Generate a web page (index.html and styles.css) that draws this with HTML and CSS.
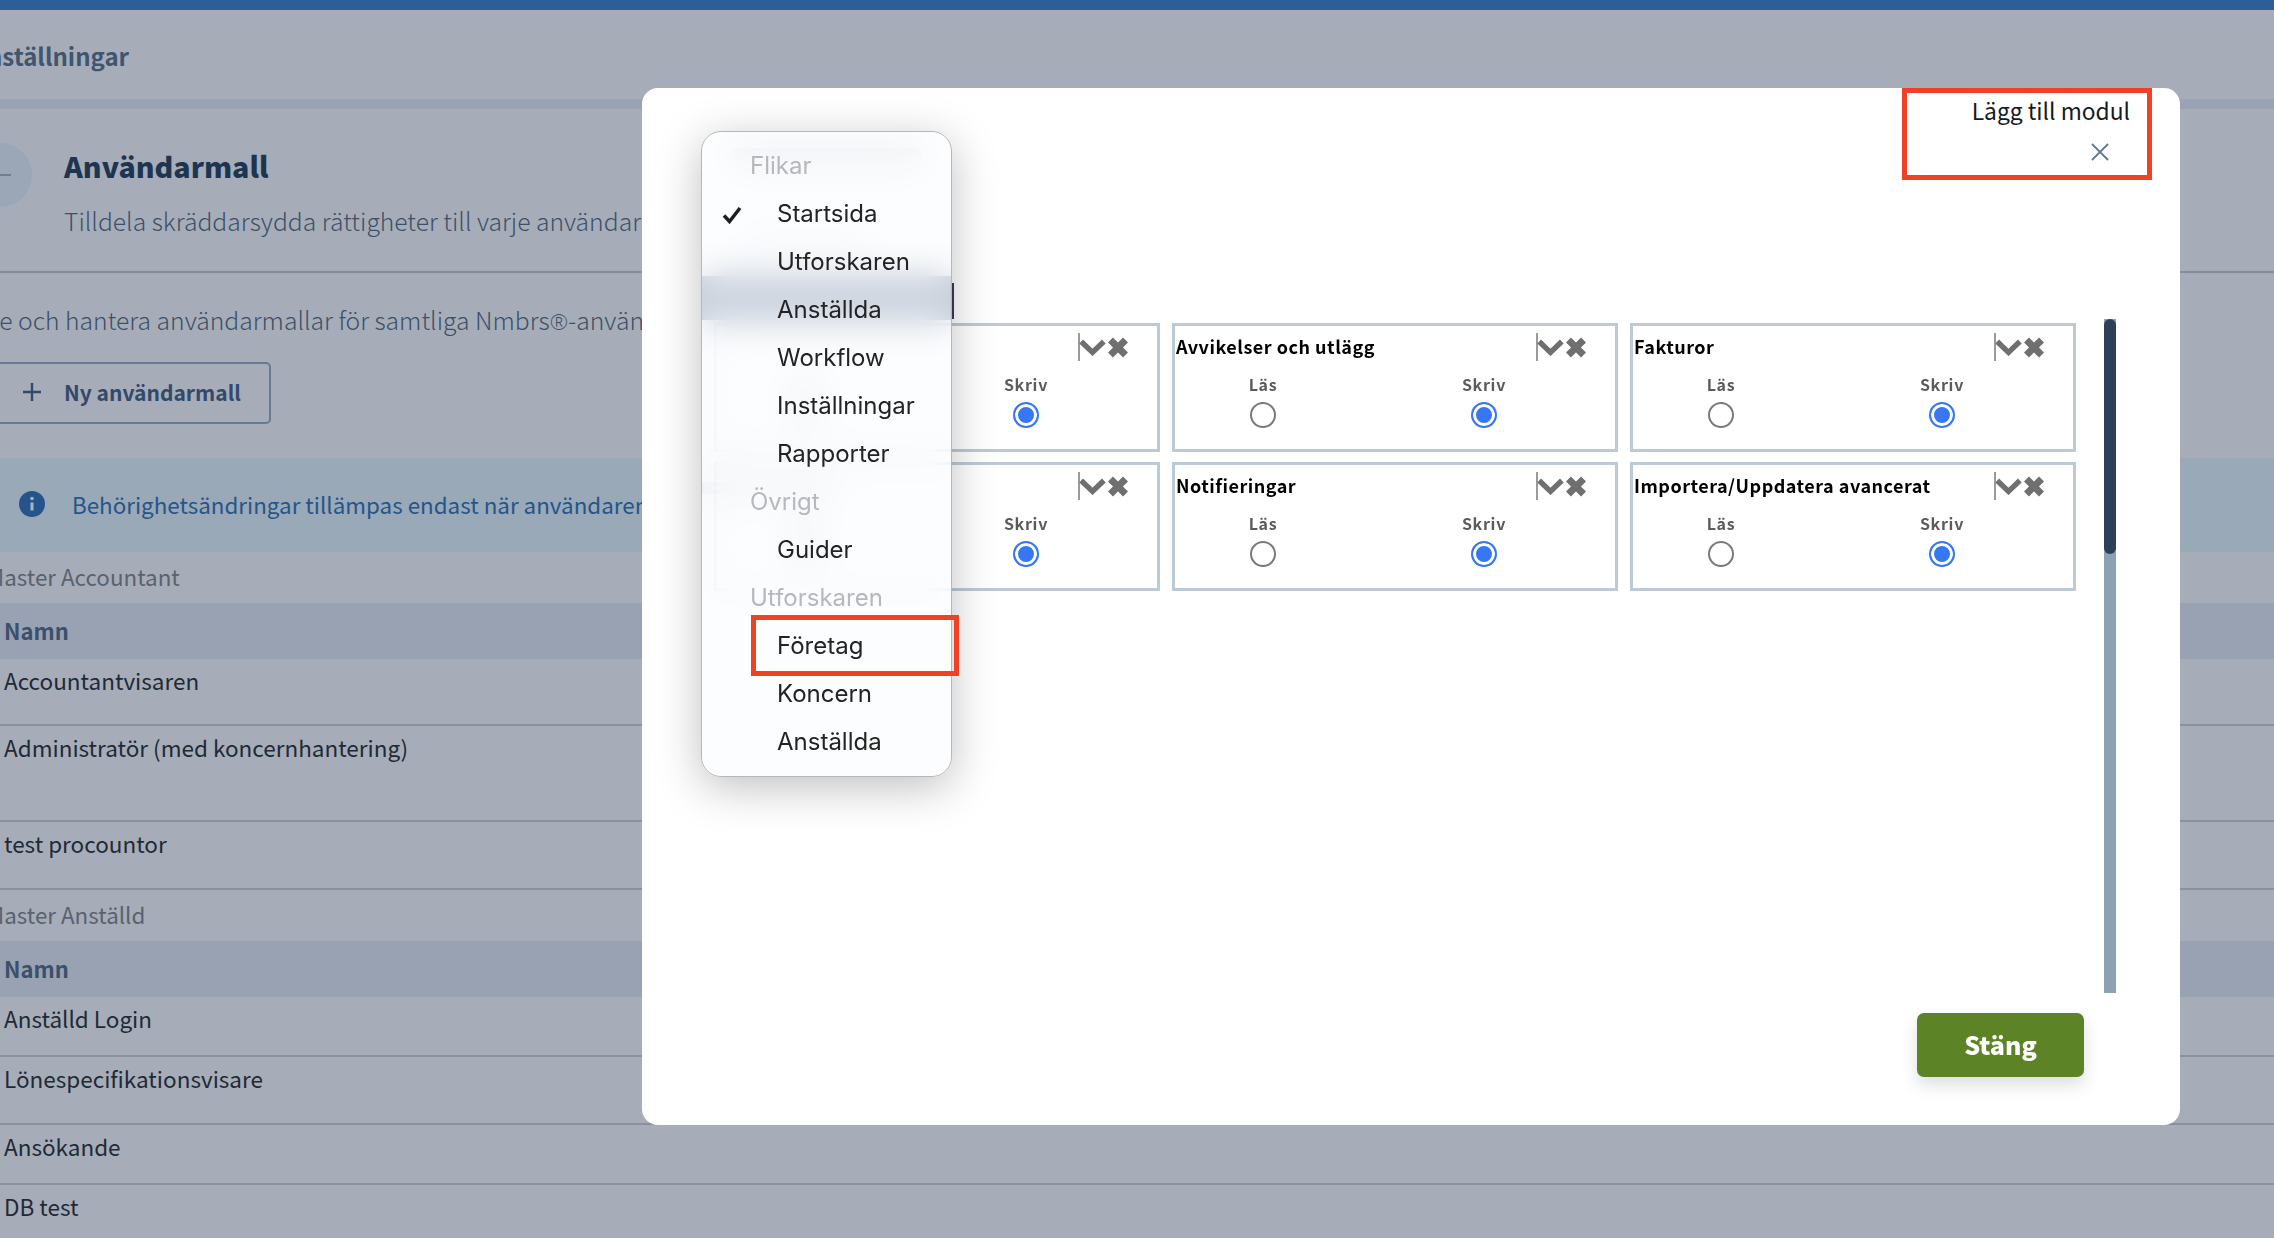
FILE: index.html
```html
<!DOCTYPE html>
<html lang="sv">
<head>
<meta charset="utf-8">
<title>Användarmall</title>
<link rel="stylesheet" href="styles.css">
</head>
<body>
<div class="page">
  <div class="topbar"></div>
  <div class="crumb"><span class="crumb-text">Inställningar</span></div>
  <div class="stripe"></div>
  <section class="intro">
    <div class="avatar"><span class="avatar-dash"></span></div>
    <div class="intro-text">
      <h1 class="title">Användarmall</h1>
      <p class="subtitle">Tilldela skräddarsydda rättigheter till varje användare och anpassa vad de kan se och göra</p>
    </div>
  </section>
  <p class="lead">Se och hantera användarmallar för samtliga Nmbrs<span class="reg">®</span>-användare i din organisation och koncern</p>
  <button class="new-btn"><svg class="plus" viewBox="0 0 20 20" width="20" height="20"><path d="M10 1v18M1 10h18" fill="none" stroke="#33496a" stroke-width="2.4"/></svg>Ny användarmall</button>
  <div class="banner">
    <svg class="info" viewBox="0 0 26 26" width="26" height="26"><circle cx="13" cy="13" r="13" fill="#25548a"/><circle cx="13" cy="7.5" r="1.8" fill="#a6b4c4"/><path d="M13 11.5v8" stroke="#a6b4c4" stroke-width="3"/></svg>
    <span>Behörighetsändringar tillämpas endast när användaren loggar in på nytt i systemet</span>
  </div>
  <div class="group-label">Master Accountant</div>
  <div class="thead">Namn</div>
  <div class="row h67">Accountantvisaren</div>
  <div class="row h96">Administratör (med koncernhantering)</div>
  <div class="row h68">test procountor</div>
  <div class="group-label">Master Anställd</div>
  <div class="thead">Namn</div>
  <div class="row h60">Anställd Login</div>
  <div class="row h68">Lönespecifikationsvisare</div>
  <div class="row h60">Ansökande</div>
  <div class="row h60">DB test</div>
</div>

<div class="modal">
  <div class="modal-head">
    <div class="add-title">Lägg till modul</div>
    <svg class="close" viewBox="0 0 18 18" width="18" height="18"><path d="M1 1l16 16M17 1L1 17" fill="none" stroke="#64778d" stroke-width="1.8"/></svg>
  </div>
  <div class="modal-body">
    <div class="cards">
      <div class="card">
        <div class="card-head"><span class="card-title"></span><span class="handle"></span><svg class="chev" viewBox="0 0 25 15"><path d="M2 2l10.500 10L23 2" fill="none" stroke="#6f6f6f" stroke-width="5"/></svg><svg class="cross" viewBox="0 0 19 18"><path d="M3 2.500l13 13M16 2.500l-13 13" fill="none" stroke="#6f6f6f" stroke-width="6"/></svg></div>
        <div class="perms"><label class="perm">Läs<input type="radio" name="m1"></label><label class="perm">Skriv<input type="radio" name="m1" checked></label></div>
      </div>
      <div class="card">
        <div class="card-head"><span class="card-title">Avvikelser och utlägg</span><span class="handle"></span><svg class="chev" viewBox="0 0 25 15"><path d="M2 2l10.500 10L23 2" fill="none" stroke="#6f6f6f" stroke-width="5"/></svg><svg class="cross" viewBox="0 0 19 18"><path d="M3 2.500l13 13M16 2.500l-13 13" fill="none" stroke="#6f6f6f" stroke-width="6"/></svg></div>
        <div class="perms"><label class="perm">Läs<input type="radio" name="m2"></label><label class="perm">Skriv<input type="radio" name="m2" checked></label></div>
      </div>
      <div class="card">
        <div class="card-head"><span class="card-title">Fakturor</span><span class="handle"></span><svg class="chev" viewBox="0 0 25 15"><path d="M2 2l10.500 10L23 2" fill="none" stroke="#6f6f6f" stroke-width="5"/></svg><svg class="cross" viewBox="0 0 19 18"><path d="M3 2.500l13 13M16 2.500l-13 13" fill="none" stroke="#6f6f6f" stroke-width="6"/></svg></div>
        <div class="perms"><label class="perm">Läs<input type="radio" name="m3"></label><label class="perm">Skriv<input type="radio" name="m3" checked></label></div>
      </div>
      <div class="card">
        <div class="card-head"><span class="card-title"></span><span class="handle"></span><svg class="chev" viewBox="0 0 25 15"><path d="M2 2l10.500 10L23 2" fill="none" stroke="#6f6f6f" stroke-width="5"/></svg><svg class="cross" viewBox="0 0 19 18"><path d="M3 2.500l13 13M16 2.500l-13 13" fill="none" stroke="#6f6f6f" stroke-width="6"/></svg></div>
        <div class="perms"><label class="perm">Läs<input type="radio" name="m4"></label><label class="perm">Skriv<input type="radio" name="m4" checked></label></div>
      </div>
      <div class="card">
        <div class="card-head"><span class="card-title">Notifieringar</span><span class="handle"></span><svg class="chev" viewBox="0 0 25 15"><path d="M2 2l10.500 10L23 2" fill="none" stroke="#6f6f6f" stroke-width="5"/></svg><svg class="cross" viewBox="0 0 19 18"><path d="M3 2.500l13 13M16 2.500l-13 13" fill="none" stroke="#6f6f6f" stroke-width="6"/></svg></div>
        <div class="perms"><label class="perm">Läs<input type="radio" name="m5"></label><label class="perm">Skriv<input type="radio" name="m5" checked></label></div>
      </div>
      <div class="card">
        <div class="card-head"><span class="card-title">Importera/Uppdatera avancerat</span><span class="handle"></span><svg class="chev" viewBox="0 0 25 15"><path d="M2 2l10.500 10L23 2" fill="none" stroke="#6f6f6f" stroke-width="5"/></svg><svg class="cross" viewBox="0 0 19 18"><path d="M3 2.500l13 13M16 2.500l-13 13" fill="none" stroke="#6f6f6f" stroke-width="6"/></svg></div>
        <div class="perms"><label class="perm">Läs<input type="radio" name="m6"></label><label class="perm">Skriv<input type="radio" name="m6" checked></label></div>
      </div>
    </div>
    <div class="scrolltrack"><div class="scrollthumb"></div></div>
  </div>
  <div class="modal-foot"><button class="close-btn">Stäng</button></div>
</div>

<div class="behind behind-title"></div>
<div class="behind behind-item"></div>
<div class="behind behind-band"></div>
<div class="behind behind-tab"></div>
<div class="behind behind-low"></div>

<nav class="menu">
  <div class="menu-group">Flikar</div>
  <div class="menu-item"><svg class="check" viewBox="0 0 20 18" width="20" height="18"><path d="M2 9.500l5.500 6L18 2" fill="none" stroke="#1f1f1f" stroke-width="3.500"/></svg>Startsida</div>
  <div class="menu-item">Utforskaren</div>
  <div class="menu-item">Anställda</div>
  <div class="menu-item">Workflow</div>
  <div class="menu-item">Inställningar</div>
  <div class="menu-item">Rapporter</div>
  <div class="menu-group">Övrigt</div>
  <div class="menu-item">Guider</div>
  <div class="menu-group">Utforskaren</div>
  <div class="menu-item">Företag</div>
  <div class="menu-item">Koncern</div>
  <div class="menu-item">Anställda</div>
</nav>

<div class="mark mark-head"></div>
<div class="mark mark-item"></div>
</body>
</html>
```

FILE: styles.css
```css
* { box-sizing: border-box; }
html, body { margin: 0; height: 100%; overflow: hidden; }
body {
  background: #a6adb8;
  font-family: "Noto Sans CJK SC", "Noto Sans", sans-serif;
  color: #1f2a36;
}
.page { height: 1238px; overflow: hidden; display: flex; flex-direction: column; }
.topbar { height: 10px; flex: none; background: #2c5f97; }
.crumb { height: 89px; flex: none; display: flex; align-items: center; padding-top: 2px; }
.crumb-text { margin-left: -21px; font-size: 24px; line-height: 30px; font-weight: 700; color: #3f5570; white-space: nowrap; }
.stripe { height: 10px; flex: none; background: #99a3b3; }
.intro { height: 164px; flex: none; display: flex; border-bottom: 2px solid #848f9f; position: relative; }
.avatar { position: absolute; left: -32px; top: 34px; width: 64px; height: 64px; border-radius: 50%; background: #9ba6b6; display: flex; align-items: center; justify-content: center; }
.avatar-dash { width: 22px; height: 2px; background: #6e7e93; display: block; }
.intro-text { margin-left: 64px; white-space: nowrap; }
.title { margin: 37px 0 0; font-size: 28.600px; line-height: 40px; font-weight: 900; color: #1e3552; }
.subtitle { margin: 19px 0 0; font-size: 24.700px; line-height: 30px; font-weight: 300; color: #3d5068; }
.lead { margin: 31px 0 0 -15px; height: 30px; flex: none; font-size: 24.700px; line-height: 30px; font-weight: 300; color: #3d5068; white-space: nowrap; }
.reg { font-family: "Open Sans", sans-serif; font-size: 22px; }
.new-btn { flex: none; margin: 28px 0 0 -20px; width: 291px; height: 62px; border: 2px solid #667a93; border-radius: 5px; background: transparent; display: flex; align-items: center; padding: 0 0 2px 40px; font-family: inherit; font-size: 21px; font-weight: 700; color: #33496a; gap: 22px; }
.plus { flex: none; }
.banner { flex: none; margin-top: 34px; height: 94px; background: #99a9b8; display: flex; align-items: center; padding: 0 0 3px 19px; gap: 27px; font-size: 22.400px; color: #26558a; white-space: nowrap; }
.info { flex: none; }
.group-label { flex: none; height: 51px; display: flex; align-items: center; margin-left: -14px; padding-bottom: 3px; font-size: 22.400px; color: #5a626e; white-space: nowrap; }
.thead { flex: none; height: 56px; background: #98a2b2; display: flex; align-items: center; padding: 0 0 3px 4px; font-size: 22px; font-weight: 700; color: #3a506b; }
.row { flex: none; padding-left: 4px; border-bottom: 2px solid #8a919d; font-size: 22.500px; line-height: 30px; color: #1f2a36; white-space: nowrap; padding-top: 6px; }
.h60 { height: 60px; }
.h67 { height: 67px; }
.h68 { height: 68px; }
.h96 { height: 96px; }

.modal { position: fixed; left: 642px; top: 88px; width: 1538px; height: 1037px; background: #fff; border-radius: 16px; display: flex; flex-direction: column; }
.modal-head { height: 231px; flex: none; display: flex; flex-direction: column; align-items: flex-end; padding-top: 7px; }
.add-title { margin-right: 50px; font-size: 22.800px; line-height: 32px; font-weight: 400; color: #141a20; }
.close { margin: 16px 71px 0 0; }
.modal-body { height: 674px; flex: none; display: flex; padding-left: 72px; }
.cards { padding-top: 4px; width: 1362px; display: grid; grid-template-columns: repeat(3, 446px); grid-auto-rows: 129px; gap: 10px 12px; align-content: start; }
.card { border: 3px solid #bccad6; display: flex; flex-direction: column; }
.card-head { height: 46px; flex: none; display: flex; align-items: flex-start; padding-left: 1px; position: relative; }
.card-title { margin-top: 8px; font-size: 18px; font-weight: 700; line-height: 24px; color: #000; letter-spacing: .5px; white-space: nowrap; }
.handle { position: absolute; left: 361px; top: 7px; width: 2px; height: 28px; background: #9a9a9a; }
.chev { position: absolute; left: 362px; top: 13px; width: 27px; height: 17px; filter: blur(.6px); }
.cross { position: absolute; left: 390px; top: 11px; width: 22px; height: 21px; filter: blur(.6px); }
.perms { display: flex; padding-left: 56px; }
.perm { flex: none; text-align: center; display: flex; flex-direction: column; align-items: center; font-size: 16px; line-height: 24px; font-weight: 700; color: #5b5b5b; letter-spacing: .7px; width: 64px; }
.perm + .perm { margin-left: 157px; }
.perm input { appearance: none; margin: 6px 0 0; width: 26px; height: 26px; border-radius: 50%; border: 2px solid #7a7a7a; background: #fff; }
.perm input:checked { border-color: #3677f5; background: #3677f5; box-shadow: inset 0 0 0 3px #fff; }
.scrolltrack { width: 12px; flex: none; margin-left: 28px; background: #8ea1b2; }
.scrollthumb { height: 235px; background: #2c4157; border-radius: 6px; }
.modal-foot { padding: 20px 96px 0 0; display: flex; justify-content: flex-end; }
.close-btn { width: 167px; height: 64px; border: 0; border-radius: 7px; padding: 0 0 2px; background: #5c8326; color: #fff; font-family: inherit; font-size: 25px; font-weight: 900; box-shadow: 0 8px 16px rgba(60, 75, 100, .18); }

.behind { position: fixed; background: #2a4773; }
.behind-title { left: 732px; top: 148px; width: 190px; height: 14px; border-radius: 7px; opacity: .3; }
.behind-item { left: 745px; top: 236px; width: 120px; height: 12px; opacity: .15; }
.behind-band { left: 702px; top: 276px; width: 250px; height: 44px; opacity: .85; }
.behind-tab { left: 950px; top: 283px; width: 4px; height: 36px; background: #3f3a50; }
.behind-low { left: 702px; top: 482px; width: 130px; height: 12px; opacity: .25; }

.menu { position: fixed; left: 701px; top: 131px; width: 251px; height: 646px; padding: 10px 0 0; border: 1px solid #b7b7b7; border-radius: 20px; background: rgba(251, 252, 254, .7); -webkit-backdrop-filter: blur(18px); backdrop-filter: blur(18px); box-shadow: 0 10px 45px rgba(0, 0, 0, .25); font-family: Inter, sans-serif; font-size: 24px; }
.menu-group, .menu-item { height: 48px; line-height: 48px; white-space: nowrap; }
.menu-group { padding-left: 48px; color: #b5b8bc; }
.menu-item { padding-left: 75px; color: #232323; position: relative; }
.check { position: absolute; left: 20px; top: 16px; }

.mark { position: fixed; border: 5px solid #ee4125; }
.mark-head { left: 1902px; top: 88px; width: 250px; height: 92px; }
.mark-item { left: 751px; top: 615px; width: 208px; height: 61px; }
```
